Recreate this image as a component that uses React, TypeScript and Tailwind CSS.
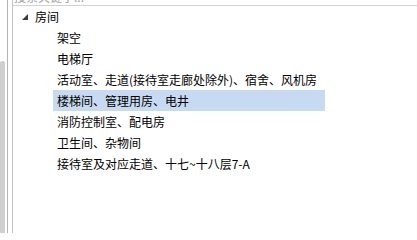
const children = [
  "架空",
  "电梯厅",
  "活动室、走道(接待室走廊处除外)、宿舍、风机房",
  "楼梯间、管理用房、电井",
  "消防控制室、配电房",
  "卫生间、杂物间",
  "接待室及对应走道、十七~十八层7-A",
];

const font = { fontFamily: '"Microsoft YaHei", "Noto Sans CJK SC", sans-serif' };

export default function App() {
  const selected = 3;
  return (
    <div className="flex w-[417px] h-[233px] overflow-hidden bg-white text-black" style={font}>
      {/* outer scrollbar */}
      <div className="flex flex-col w-[5px]">
        <div className="h-[61px]" />
        <div className="flex-1 rounded-t-[2px] bg-[#cfcfcf]" />
      </div>
      <div className="ml-[2px] w-px bg-[#b4b4b4]" />
      <div className="ml-[4px] w-px bg-[#c4c4c4]" />

      <div className="flex flex-1 flex-col">
        {/* search box, mostly scrolled off */}
        <div className="h-[6px] overflow-hidden border-b border-[#d2d2d2]">
          <div className="-mt-[9px] pl-[1px] text-[12px] leading-[12px] text-[#a0a0a0]">搜索关键字...</div>
        </div>

        <div className="flex flex-col">
          <div className="flex h-[21px] items-center">
            <svg className="ml-[9px] mt-[1px]" width="6" height="6" viewBox="0 0 6 6">
              <polygon points="6,0 6,6 0,6" fill="#3c3c3c" />
            </svg>
            <span className="ml-[7px] text-[12px] leading-[21px]">房间</span>
          </div>
          {children.map((c, i) => (
            <div
              key={c}
              className={
                "ml-[40px] flex h-[21px] w-[272px] items-center pl-[4px] text-[12px] leading-[21px] whitespace-nowrap " +
                (i === selected ? "bg-[#c8daf1]" : "")
              }
            >
              {c}
            </div>
          ))}
        </div>
      </div>
    </div>
  );
}
